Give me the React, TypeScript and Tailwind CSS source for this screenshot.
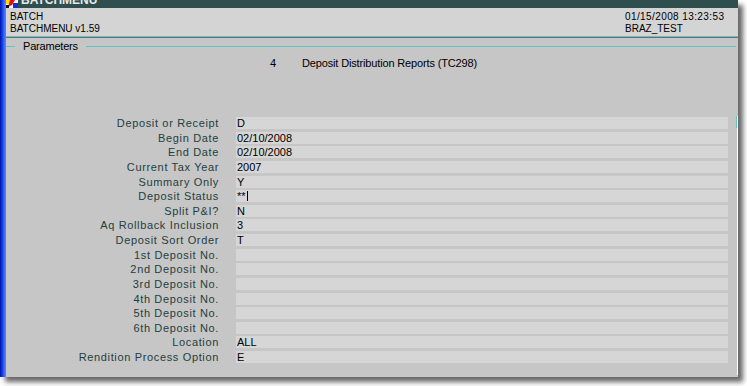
import React from "react";

const rows: [string, React.ReactNode][] = [
  ["Deposit or Receipt", "D"],
  ["Begin Date", "02/10/2008"],
  ["End Date", "02/10/2008"],
  ["Current Tax Year", "2007"],
  ["Summary Only", "Y"],
  [
    "Deposit Status",
    <span className="inline-flex items-center">
      **<span className="inline-block w-[1px] h-[10px] bg-black ml-[1px]" />
    </span>,
  ],
  ["Split P&I?", "N"],
  ["Aq Rollback Inclusion", "3"],
  ["Deposit Sort Order", "T"],
  ["1st Deposit No.", ""],
  ["2nd Deposit No.", ""],
  ["3rd Deposit No.", ""],
  ["4th Deposit No.", ""],
  ["5th Deposit No.", ""],
  ["6th Deposit No.", ""],
  ["Location", "ALL"],
  ["Rendition Process Option", "E"],
];

function AppIcon() {
  return (
    <svg width="12" height="8" viewBox="0 0 12 8" className="block">
      <rect x="0" y="0" width="12" height="8" fill="#ffffff" />
      <rect x="0" y="0" width="5" height="4" fill="#ffd800" />
      <polygon points="4,0 9,0 6,5 2,7" fill="#e01010" />
      <rect x="7" y="3" width="5" height="5" fill="#1030e0" />
      <rect x="0" y="5" width="3" height="3" fill="#101010" />
    </svg>
  );
}

export default function App() {
  return (
    <div className="w-[747px] h-[386px] bg-white font-['Liberation_Sans',Arial,sans-serif]">
      <div className="w-[738px] h-[377px] flex shadow-[5px_5px_5px_rgba(0,0,0,0.6)]">
        <div className="w-[6px] bg-linear-to-r from-[#0010a0] via-[#1d4cff] to-[#6a84e8]" />
        <div className="flex-1 flex flex-col">
          {/* title bar */}
          <div className="h-[8px] bg-[#2f4f4f] overflow-hidden flex items-start">
            <div>
              <AppIcon />
            </div>
            <div className="ml-[3px] -mt-[6px] text-[12px] leading-[12px] font-bold text-[#e8e8e8] whitespace-nowrap">
              BATCHMENU
            </div>
          </div>
          {/* header */}
          <div className="h-[28px] bg-[#d4d4d4] flex pt-[3px] text-black text-[10px] leading-[12px]">
            <div className="pl-[4px]">
              <div>BATCH</div>
              <div>BATCHMENU v1.59</div>
            </div>
            <div className="ml-auto w-[113px]">
              <div className="tracking-[0.4px]">01/15/2008 13:23:53</div>
              <div>BRAZ_TEST</div>
            </div>
          </div>
          <div className="h-[1px] bg-[#66c2c2]" />
          <div className="h-[1px] bg-[#6e6e6e]" />
          {/* body */}
          <div className="flex-1 bg-[#c6c6c6] flex">
            <div className="flex-1 flex flex-col">
              {/* legend */}
              <div className="mt-[2px] h-[13px] flex items-center">
                <div className="w-[9px] h-[1px] bg-[#66c2c2]" />
                <div className="ml-[8px] text-[11px] leading-[13px] tracking-[-0.2px] text-black">
                  Parameters
                </div>
                <div className="ml-[8px] flex-1 h-[1px] bg-[#66c2c2]" />
              </div>
              {/* report title */}
              <div className="mt-[4px] h-[12px] flex text-[11px] leading-[12px] text-black pl-[264px]">
                <div className="w-[32px]">4</div>
                <div className="tracking-[-0.15px] whitespace-nowrap">
                  Deposit Distribution Reports (TC298)
                </div>
              </div>
              {/* form */}
              <div className="mt-[48px] grid grid-cols-[213px_492px] gap-x-[17px] gap-y-[2.625px]">
                {rows.map(([label, value], i) => (
                  <React.Fragment key={i}>
                    <div className="h-[12px] text-right text-[11px] leading-[12px] tracking-[0.65px] text-[#243e3e] whitespace-nowrap">
                      {label}
                    </div>
                    <div className="h-[12px] bg-[#d6d6d6] pl-[1px] text-[11px] leading-[12px] text-black whitespace-nowrap">
                      {value}
                    </div>
                  </React.Fragment>
                ))}
              </div>
            </div>
            {/* right scroll edge */}
            <div className="w-[2px] flex pt-[78px] pb-[2px]">
              <div className="w-[1px] h-[12px] bg-[#66c2c2]" />
              <div className="w-[1px] bg-white" />
            </div>
          </div>
        </div>
      </div>
    </div>
  );
}
